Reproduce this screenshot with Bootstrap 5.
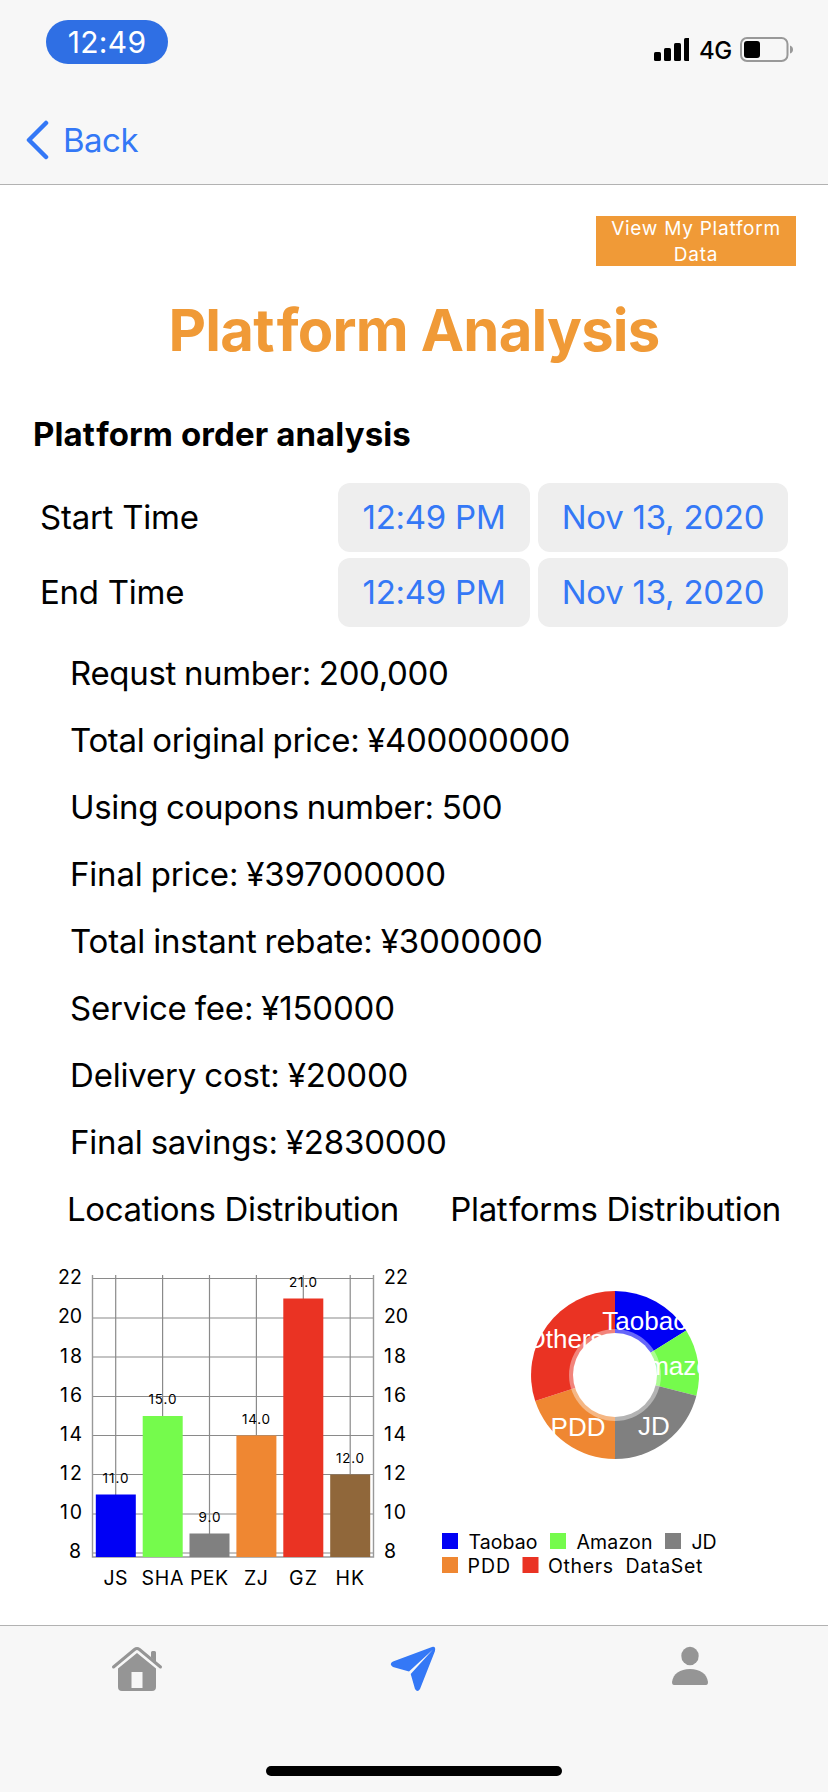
<!DOCTYPE html>
<html lang="en">
<head>
<meta charset="utf-8">
<meta name="viewport" content="width=device-width, initial-scale=1">
<title>Platform Analysis</title>
<link href="https://cdn.jsdelivr.net/npm/bootstrap@5.3.0/dist/css/bootstrap.min.css" rel="stylesheet">
<style>
body{font-family:Inter,"Liberation Sans",sans-serif;font-size:33px;line-height:67px;color:#000;letter-spacing:-.25px;font-variant-ligatures:no-common-ligatures;overflow:hidden}
.screen{width:828px;height:1792px}
.topbar{height:185px;background:#f7f7f7;border-bottom:1px solid #b2b2b2}
.status{height:84px;padding:20px 34px 0 46px}
.clock{width:122px;height:44px;line-height:44px;border-radius:22px;background:#2f6fe4;color:#fff;font-size:30px;letter-spacing:.3px}
.net{font-size:24px;line-height:30px;letter-spacing:-.3px;font-weight:500}
.back{height:100px;padding:12px 0 0 26px;color:#3478f6;letter-spacing:-.5px}
.accent{color:#f09a37}
.viewbtn{width:200px;height:50px;background:#f09a37;border:0;border-radius:0;color:#fff;font-size:19px;line-height:26px;letter-spacing:.75px;margin:31px 32px 0 0}
.title{font-size:58px;line-height:80px;font-weight:700;margin:24px 0 34px;letter-spacing:-.8px}
.sub{font-size:33px;line-height:60px;font-weight:700;margin:0 0 16px 33px;letter-spacing:.1px}
.tf{letter-spacing:.04em}
.timerow{height:75px;padding:0 40px}
.pick{height:69px;line-height:69px;background:#eee;border-radius:12px;color:#3478f6}
.t{width:192px}.d{width:250px}
.stats{margin:10px 0 0;padding-left:70px;letter-spacing:-.33px;word-spacing:-1px}
.stats li{height:67px}
.stats li:nth-child(n+4){letter-spacing:-.19px}
.heads{height:66px;letter-spacing:-.35px}
.tabs{height:167px;background:#f7f7f7;border-top:1px solid #b2b2b2}
.indicator{width:296px;height:10px;border-radius:5px;background:#000;bottom:16px;left:266px}
svg{display:block}
</style>
</head>
<body>
<div class="screen d-flex flex-column bg-white position-relative">
  <header class="topbar flex-shrink-0">
    <div class="status d-flex justify-content-between">
      <div class="clock text-center">12:49</div>
      <div class="d-flex align-items-start pt-3">
        <svg width="35" height="26" viewBox="653 36 35 26" style="margin-right:10px"><g><rect x="653" y="52" width="7" height="9" rx="1.6"/><rect x="663" y="48" width="7" height="13" rx="1.6"/><rect x="673" y="43" width="7" height="18" rx="1.6"/><rect x="683" y="38" width="7" height="23" rx="1.6"/></g></svg>
        <span class="net">4G</span>
        <svg class="ms-2" width="54" height="26" viewBox="741 36 54 26"><rect x="742" y="38" width="46.500" height="23" rx="6" fill="none" stroke="#999" stroke-width="2"/><rect x="745" y="41" width="16" height="17" rx="3"/><path d="M791 45.500q3 1 3 4t-3 4z" fill="#999"/></svg>
      </div>
    </div>
    <a class="back d-flex align-items-center text-decoration-none" href="#">
      <svg width="23" height="40" viewBox="0 0 23 40" fill="none" stroke="#3478f6" stroke-width="4.500" stroke-linecap="round" stroke-linejoin="round"><path d="M20 3L3 20l17 17"/></svg>
      <span style="margin-left:14px">Back</span>
    </a>
  </header>

  <main class="flex-grow-1">
    <button class="viewbtn d-block ms-auto p-0">View My Platform Data</button>
    <h1 class="title accent text-center">Pla<span class="tf">t</span>form Analysis</h1>
    <h2 class="sub">Pla<span class="tf">t</span>form order analysis</h2>
    <div class="timerow d-flex align-items-center">
      <span class="me-auto">Start Time</span><div class="pick t text-center me-2">12:49 PM</div><div class="pick d text-center">Nov 13, 2020</div>
    </div>
    <div class="timerow d-flex align-items-center">
      <span class="me-auto">End Time</span><div class="pick t text-center me-2">12:49 PM</div><div class="pick d text-center">Nov 13, 2020</div>
    </div>
    <ul class="stats list-unstyled">
      <li>Requst number: 200,000</li>
      <li>Total original price: ¥400000000</li>
      <li>Using coupons number: 500</li>
      <li>Final price: ¥397000000</li>
      <li>Total instant rebate: ¥3000000</li>
      <li>Service fee: ¥150000</li>
      <li>Delivery cost: ¥20000</li>
      <li>Final savings: ¥2830000</li>
    </ul>
    <div class="heads d-flex justify-content-between" style="padding:0 47px 0 67px"><span>Locations Distribution</span><span>Pla<span class="tf">t</span>forms Distribution</span></div>
    <div class="d-flex">
      <svg width="414" height="383" viewBox="0 1242 414 383" font-family="Inter,sans-serif" letter-spacing="0">
        <path d="M92 1278.500H374M92 1318H374M92 1357H374M92 1396.500H374M92 1435.500H374M92 1474.500H374M92 1514H374M92 1553H374M115.700 1275V1557M162.600 1275V1557M209.500 1275V1557M256.400 1275V1557M303.300 1275V1557M350.200 1275V1557" stroke="#8a8a8a" stroke-width="1.200"/>
        <path d="M92.500 1275V1557H373.500V1275" fill="none" stroke="#999" stroke-width="1.400"/>
        <g>
          <rect x="95.800" y="1494.500" width="40" height="62.500" fill="#0000f5"/>
          <rect x="142.700" y="1416" width="40" height="141" fill="#75fb4c"/>
          <rect x="189.500" y="1533.500" width="40" height="23.500" fill="#808080"/>
          <rect x="236.400" y="1435.500" width="40" height="121.500" fill="#ef8732"/>
          <rect x="283.300" y="1298.500" width="40" height="258.500" fill="#ea3323"/>
          <rect x="330.200" y="1474.500" width="40" height="82.500" fill="#90673a"/>
        </g>
        <g font-size="13.500">
          <text x="102.500" y="1483" textLength="26">11.0</text><text x="148.500" y="1403.700" textLength="28">15.0</text><text x="198.500" y="1522" textLength="22">9.0</text><text x="242" y="1423.700" textLength="28">14.0</text><text x="289" y="1287" textLength="28">21.0</text><text x="336" y="1463" textLength="28">12.0</text>
        </g>
        <g font-size="19.500">
          <text x="58" y="1284" textLength="24">22</text><text x="58" y="1323" textLength="24">20</text><text x="60" y="1362.500" textLength="22">18</text><text x="60" y="1401.500" textLength="22">16</text><text x="60" y="1441" textLength="22">14</text><text x="60" y="1480" textLength="22">12</text><text x="60" y="1519" textLength="22">10</text><text x="69" y="1558">8</text>
          <text x="384" y="1284" textLength="24">22</text><text x="384" y="1323" textLength="24">20</text><text x="384" y="1362.500" textLength="22">18</text><text x="384" y="1401.500" textLength="22">16</text><text x="384" y="1441" textLength="22">14</text><text x="384" y="1480" textLength="22">12</text><text x="384" y="1519" textLength="22">10</text><text x="384" y="1558">8</text>
          <text x="103.500" y="1585" textLength="24">JS</text><text x="141.500" y="1585" textLength="42">SHA</text><text x="190" y="1585" textLength="38">PEK</text><text x="244" y="1585" textLength="24">ZJ</text><text x="289" y="1585" textLength="28">GZ</text><text x="335.500" y="1585" textLength="28.500">HK</text>
        </g>
      </svg>
      <svg width="414" height="383" viewBox="414 1242 414 383" font-family="Inter,sans-serif" letter-spacing="0">
        <path d="M615 1375V1291A84 84 0 0 1 686.200 1330.400Z" fill="#0000f5"/>
        <path d="M615 1375L686.200 1330.400A84 84 0 0 1 696.400 1395.700Z" fill="#75fb4c"/>
        <path d="M615 1375L696.400 1395.700A84 84 0 0 1 615 1459Z" fill="#808080"/>
        <path d="M615 1375V1459A84 84 0 0 1 535.200 1401.100Z" fill="#ef8732"/>
        <path d="M615 1375L535.200 1401.100A84 84 0 0 1 615 1291Z" fill="#ea3323"/>
        <circle cx="615" cy="1375" r="46" fill="#fff" fill-opacity=".4"/><circle cx="615" cy="1375" r="42" fill="#fff"/>
        <g fill="#fff" font-size="26" text-anchor="middle" font-family="Liberation Sans,sans-serif">
          <text x="645" y="1330.300">Taobao</text><text x="677.500" y="1375">Amazon</text><text x="654" y="1435">JD</text><text x="578" y="1436">PDD</text><text x="564.500" y="1347.700">Others</text>
        </g>
        <rect x="442" y="1533" width="16" height="16" fill="#0000f5"/><rect x="550" y="1533" width="16" height="16" fill="#75fb4c"/><rect x="665" y="1533" width="16" height="16" fill="#808080"/><rect x="442" y="1557" width="16" height="16" fill="#ef8732"/><rect x="522.500" y="1557" width="16" height="16" fill="#ea3323"/>
        <g font-size="19.500">
          <text x="468.500" y="1549" textLength="69">Taobao</text><text x="576.500" y="1549" textLength="76">Amazon</text><text x="691.500" y="1549" textLength="25">JD</text><text x="467.500" y="1572.700" textLength="42.500">PDD</text><text x="548" y="1572.700" textLength="65">Others</text><text x="625.500" y="1572.700" textLength="77">DataSet</text>
        </g>
      </svg>
    </div>
  </main>

  <nav class="tabs flex-shrink-0 row g-0">
    <div class="col-4"><svg width="276" height="80" viewBox="0 1626 276 80" fill="#959595"><path d="M113.500 1667L134.500 1649.500q2.500-2 5 0l21 17.500" fill="none" stroke="#959595" stroke-width="3" stroke-linecap="round" stroke-linejoin="round"/><path d="M151 1652.500q0-1.500 1.500-1.500h2q1.500 0 1.500 1.500v9.500l-5-4.500zM118 1668.500l19-15.500 19 15.500v18.500q0 4-4 4h-30q-4 0-4-4zm13.500 3.500v16h11v-16z" fill-rule="evenodd"/></svg></div>
    <div class="col-4"><svg width="276" height="80" viewBox="276 1626 276 80" fill="#3478f6"><path d="M432 1647q4-1 3 4L420 1689q-2.500 4-5 0L410.700 1674L433 1649.500L409 1671.500L393 1667q-4.500-3 0-5.500z"/></svg></div>
    <div class="col-4"><svg width="276" height="80" viewBox="552 1626 276 80" fill="#959595"><ellipse cx="690" cy="1656" rx="8.700" ry="9.300"/><path d="M674 1685q-2 0-2-3c1-8 8-13 18-13s17 5 18 13q0 3-2 3z"/></svg></div>
  </nav>
  <div class="indicator position-absolute"></div>
</div>
<script src="https://cdn.jsdelivr.net/npm/bootstrap@5.3.0/dist/js/bootstrap.bundle.min.js"></script>
</body>
</html>
